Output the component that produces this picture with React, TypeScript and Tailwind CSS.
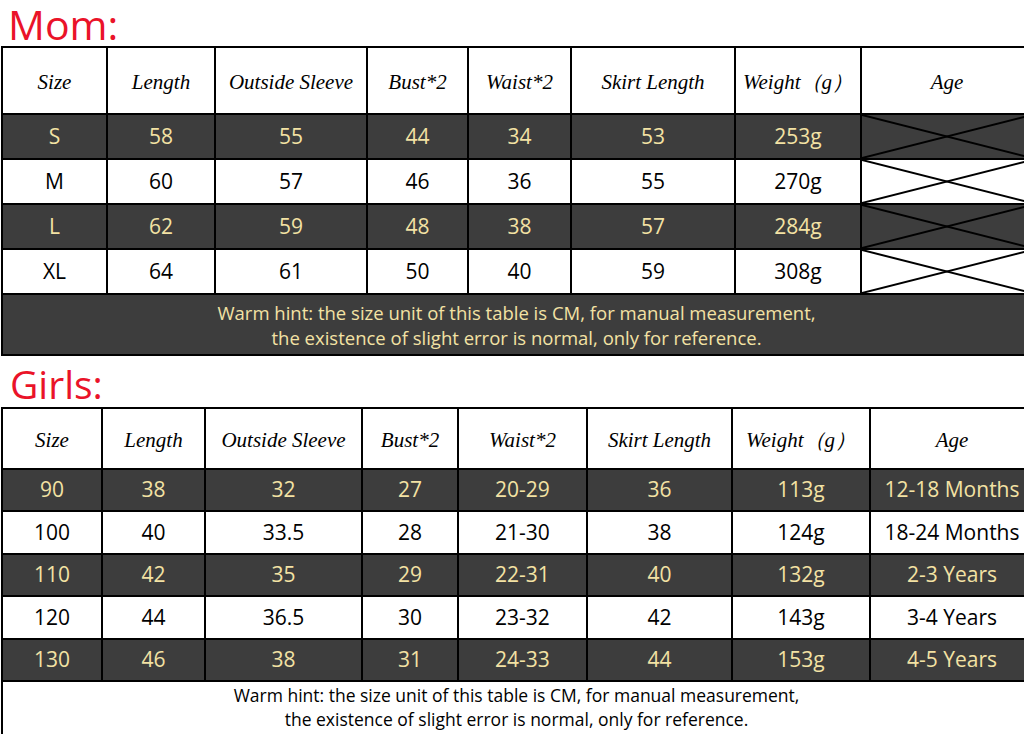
import React from 'react';

const dark = 'bg-[#3d3d3d] text-[#f3e2a4]';
const light = 'bg-white text-black';

const momCols = 'grid-cols-[105px_108px_152px_101px_103px_164px_126px_172px]';
const girlsCols = 'grid-cols-[100px_103px_157px_96px_129px_145px_138px_164px]';

const headers = ['Size', 'Length', 'Outside Sleeve', 'Bust*2', 'Waist*2', 'Skirt Length', 'Weight（g）', 'Age'];

const momRows = [
  ['S', '58', '55', '44', '34', '53', '253g'],
  ['M', '60', '57', '46', '36', '55', '270g'],
  ['L', '62', '59', '48', '38', '57', '284g'],
  ['XL', '64', '61', '50', '40', '59', '308g'],
];

const girlsRows = [
  ['90', '38', '32', '27', '20-29', '36', '113g', '12-18 Months'],
  ['100', '40', '33.5', '28', '21-30', '38', '124g', '18-24 Months'],
  ['110', '42', '35', '29', '22-31', '40', '132g', '2-3 Years'],
  ['120', '44', '36.5', '30', '23-32', '42', '143g', '3-4 Years'],
  ['130', '46', '38', '31', '24-33', '44', '153g', '4-5 Years'],
];

const cell = 'flex items-center justify-center border-r-2 border-b-2 border-black';
const sans = { fontFamily: '"Open Sans", "Noto Sans", sans-serif' };
const script = { fontFamily: '"Liberation Serif", serif' };

// crossed-out cell for the empty Age column
function Cross() {
  return (
    <svg className="block w-full h-[43px]" viewBox="0 0 100 100" preserveAspectRatio="none">
      <line x1="0" y1="0" x2="100" y2="100" stroke="black" strokeWidth="2" vectorEffect="non-scaling-stroke" />
      <line x1="0" y1="100" x2="100" y2="0" stroke="black" strokeWidth="2" vectorEffect="non-scaling-stroke" />
    </svg>
  );
}

function HeaderRow({ cols, h }: { cols: string; h: string }) {
  return (
    <div className={`grid ${cols} ${h}`}>
      {headers.map((t) => (
        <div key={t} className={`${cell} bg-white text-black italic text-[21px] pt-[4px]`} style={script}>
          {t}
        </div>
      ))}
    </div>
  );
}

export default function App() {
  return (
    <div className="w-[1024px] h-[734px] overflow-hidden bg-white">
      <div className="w-[1040px] pl-[1px]">
        {/* Mom */}
        <div className="h-[46px] pl-[7px] pt-[3px] text-[41px] leading-[43px] text-[#ea1329]" style={sans}>
          Mom:
        </div>
        <div className="border-l-2 border-t-2 border-black">
          <HeaderRow cols={momCols} h="h-[67px]" />
          {momRows.map((r, i) => (
            <div key={r[0]} className={`grid ${momCols} h-[45px] text-[21px] ${i % 2 === 0 ? dark : light}`} style={sans}>
              {r.map((v, j) => (
                <div key={j} className={cell}>{v}</div>
              ))}
              <div className="border-r-2 border-b-2 border-black overflow-hidden">
                <Cross />
              </div>
            </div>
          ))}
          <div
            className={`h-[61px] border-b-2 border-black ${dark} text-[18.5px] leading-[25px] flex flex-col items-center justify-center pr-[10px]`}
            style={sans}
          >
            <span>Warm hint: the size unit of this table is CM, for manual measurement,</span>
            <span>the existence of slight error is normal, only for reference.</span>
          </div>
        </div>

        {/* Girls */}
        <div className="h-[51px] pl-[9px] pt-[5px] text-[39px] leading-[46px] text-[#ea1329]" style={sans}>
          Girls:
        </div>
        <div className="border-l-2 border-t-2 border-black">
          <HeaderRow cols={girlsCols} h="h-[61px]" />
          {girlsRows.map((r, i) => (
            <div key={r[0]} className={`grid ${girlsCols} h-[42.4px] text-[21px] ${i % 2 === 0 ? dark : light}`} style={sans}>
              {r.map((v, j) => (
                <div key={j} className={`${cell} whitespace-nowrap`}>{v}</div>
              ))}
            </div>
          ))}
          <div className="h-[56px] bg-white text-black text-[17.5px] leading-[24px] flex flex-col items-center pt-[1px] pr-[10px]" style={sans}>
            <span>Warm hint: the size unit of this table is CM, for manual measurement,</span>
            <span>the existence of slight error is normal, only for reference.</span>
          </div>
        </div>
      </div>
    </div>
  );
}
